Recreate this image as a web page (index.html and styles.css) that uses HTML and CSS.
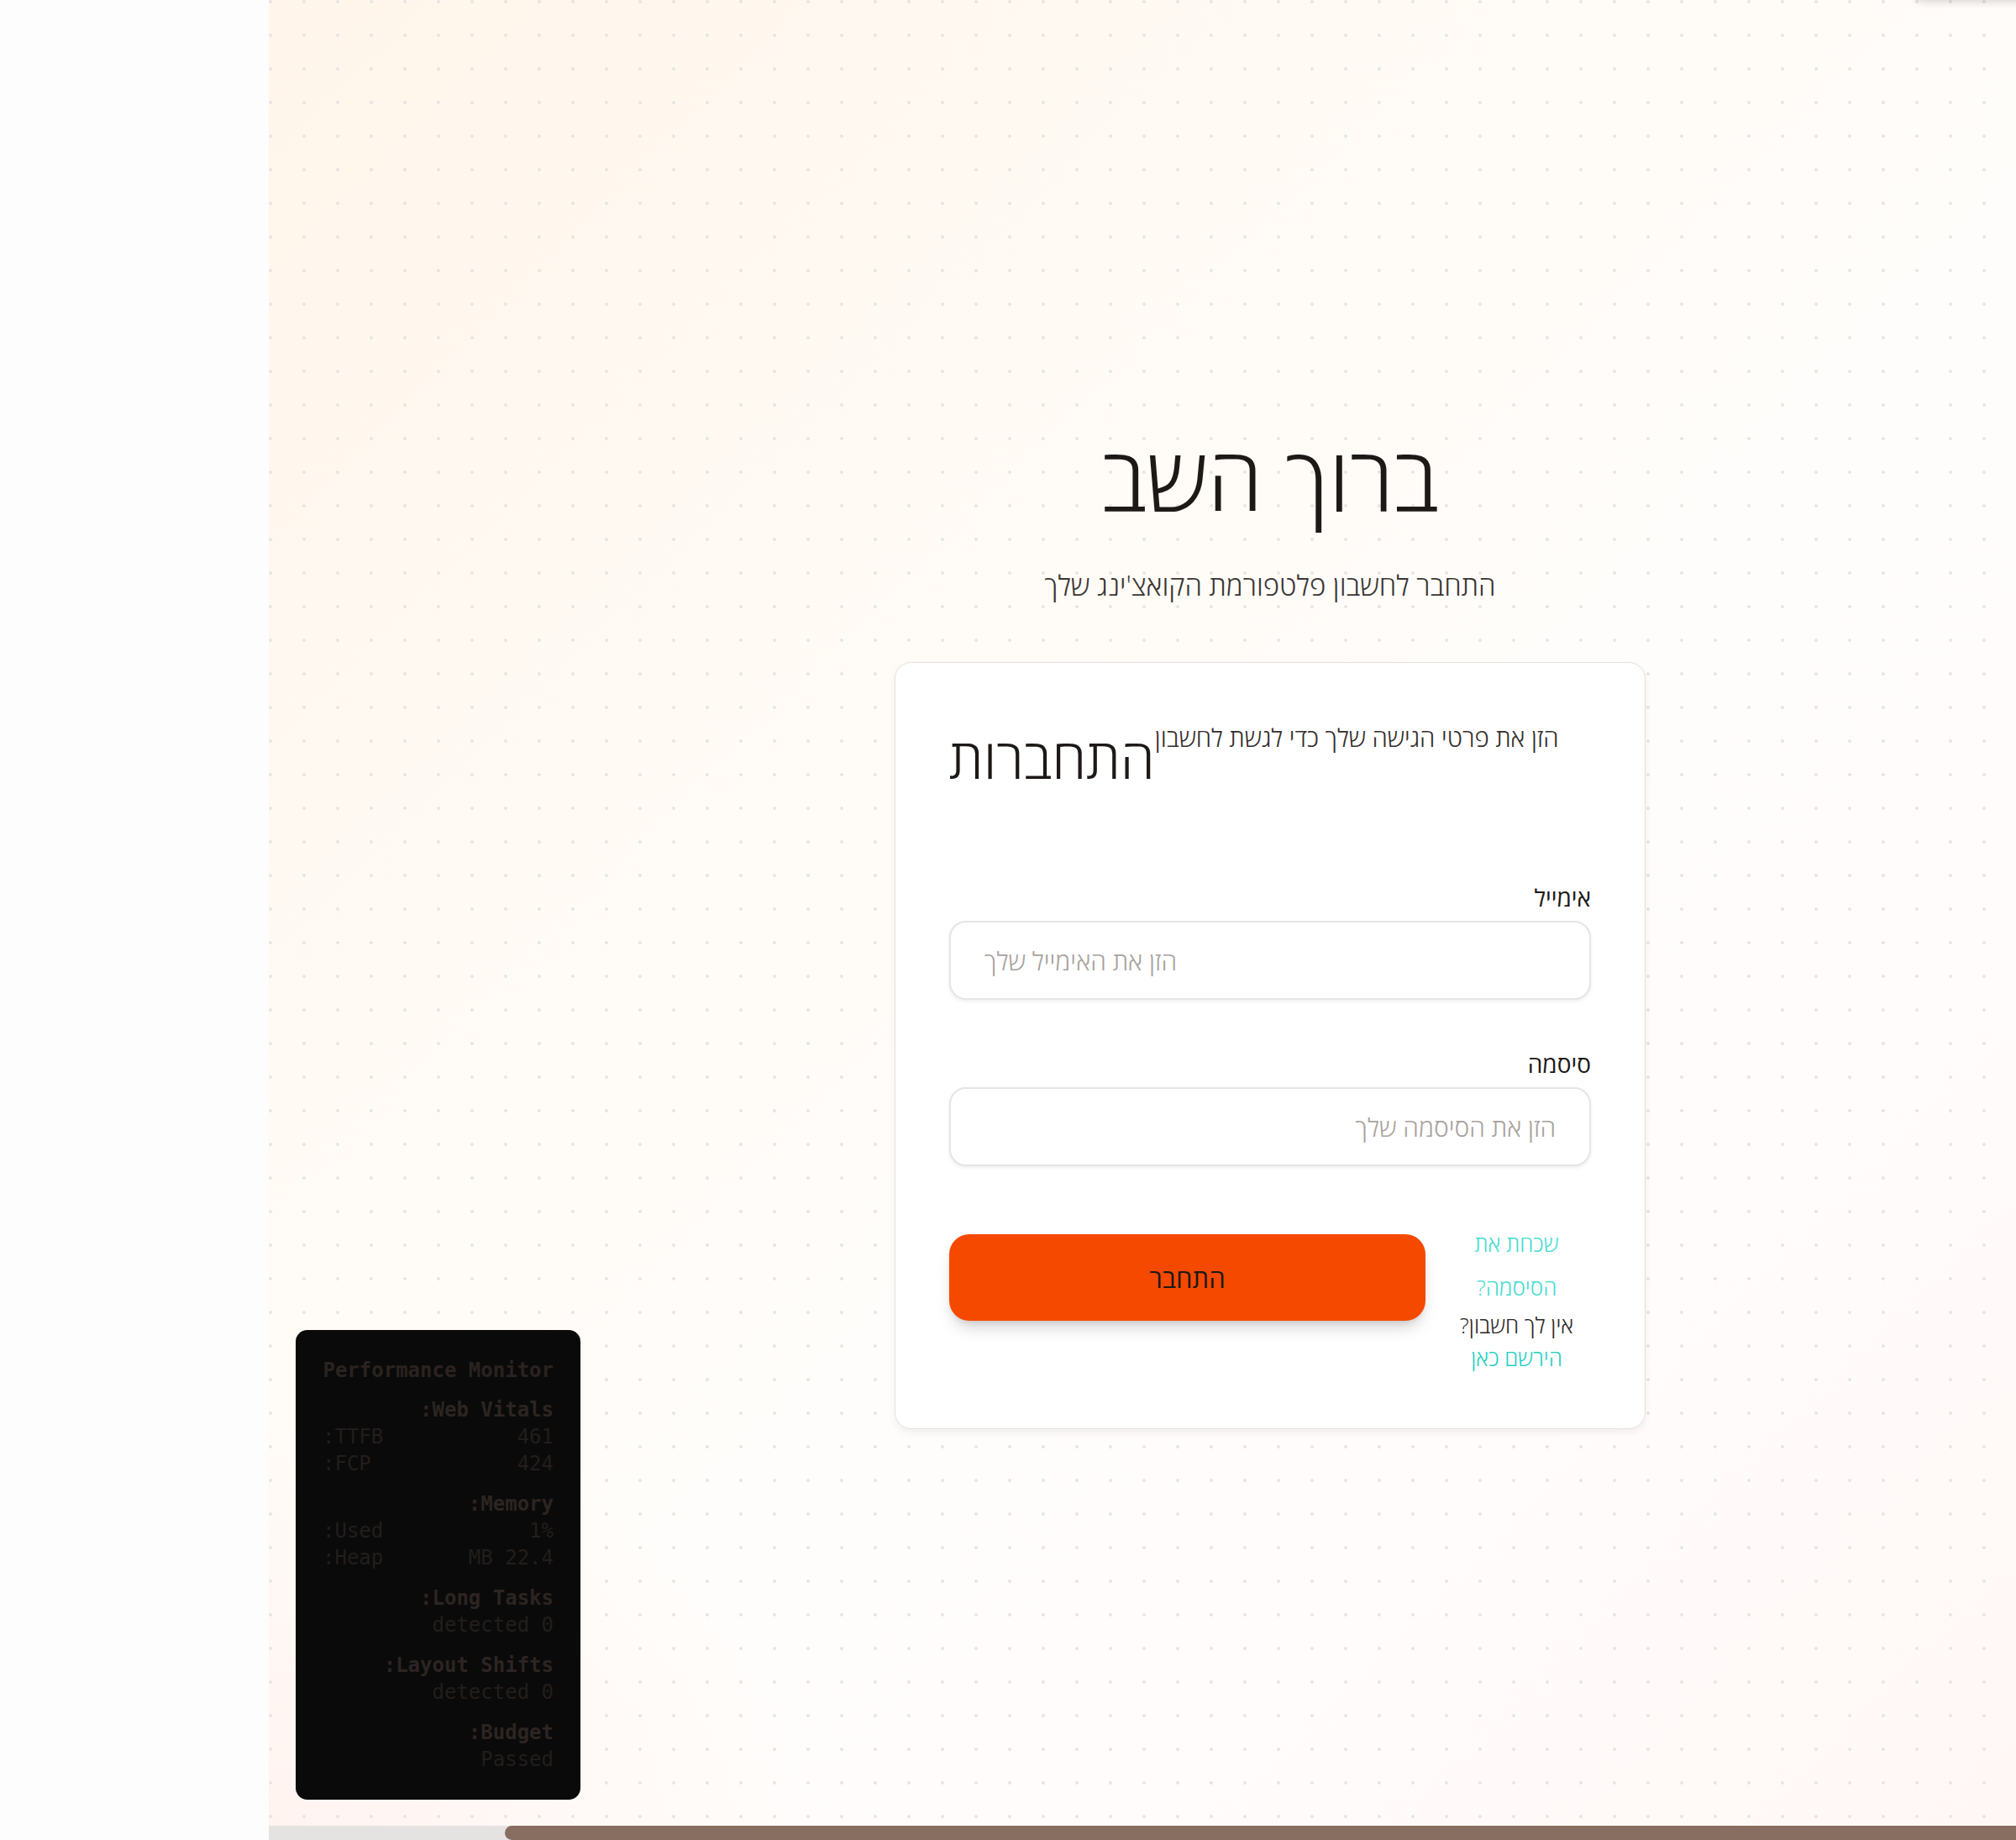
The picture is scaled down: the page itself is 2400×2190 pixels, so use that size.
FILE: index.html
```html
<!DOCTYPE html>
<html lang="he" dir="rtl">
<head>
<meta charset="utf-8">
<title>התחברות</title>
<link rel="stylesheet" href="styles.css">
</head>
<body>
<div class="app">
  <div class="side-strip"></div>
  <div class="main">
    <div class="viewport">
      <div class="top-shadow"></div>
      <div class="page">
        <h1 class="hero-title">ברוך השב</h1>
        <p class="hero-sub">התחבר לחשבון פלטפורמת הקואצ'ינג שלך</p>
        <div class="card">
          <div class="card-header">
            <h2 class="card-title">התחברות</h2>
            <p class="card-desc">הזן את פרטי הגישה שלך כדי לגשת לחשבון</p>
          </div>
          <form class="card-form">
            <div class="field">
              <label class="field-label" for="email">אימייל</label>
              <input class="field-input" id="email" type="email" dir="ltr" placeholder="הזן את האימייל שלך">
            </div>
            <div class="field">
              <label class="field-label" for="password">סיסמה</label>
              <input class="field-input" id="password" type="password" placeholder="הזן את הסיסמה שלך">
            </div>
            <div class="actions">
              <div class="links">
                <a class="link-forgot" href="#">שכחת את הסיסמה?</a>
                <p class="signup">אין לך חשבון? <a class="link-signup" href="#">הירשם כאן</a></p>
              </div>
              <button class="submit" type="button">התחבר</button>
            </div>
          </form>
        </div>
      </div>
      <div class="perf">
        <div class="perf-title">Performance Monitor</div>
        <div class="perf-section">
          <div class="perf-head">Web Vitals:</div>
          <div class="perf-row"><span>TTFB:</span><span>461</span></div>
          <div class="perf-row"><span>FCP:</span><span>424</span></div>
        </div>
        <div class="perf-section">
          <div class="perf-head">Memory:</div>
          <div class="perf-row"><span>Used:</span><span>1%</span></div>
          <div class="perf-row"><span>Heap:</span><span>22.4 MB</span></div>
        </div>
        <div class="perf-section">
          <div class="perf-head">Long Tasks:</div>
          <div class="perf-val">0 detected</div>
        </div>
        <div class="perf-section">
          <div class="perf-head">Layout Shifts:</div>
          <div class="perf-val">0 detected</div>
        </div>
        <div class="perf-section last">
          <div class="perf-head">Budget:</div>
          <div class="perf-val">Passed</div>
        </div>
      </div>
    </div>
    <div class="hscroll"><div class="hscroll-thumb"></div></div>
  </div>
</div>
</body>
</html>
```

FILE: styles.css
```css
* { box-sizing: border-box; }
html, body { margin: 0; padding: 0; }
body {
  width: 2400px;
  height: 2190px;
  overflow: hidden;
  font-family: "Open Sans", "Noto Sans", "DejaVu Sans", sans-serif;
  color: #1c1917;
  background: #fdfdfd;
}
.app {
  direction: ltr;
  display: flex;
  height: 2190px;
}
.side-strip {
  width: 320px;
  flex: none;
  background: #fdfdfd;
}
.main {
  flex: 1;
  display: flex;
  flex-direction: column;
  direction: rtl;
  min-width: 0;
}
.viewport {
  position: relative;
  flex: 1;
  overflow: hidden;
  background-color: #fffaf6;
  background-image:
    radial-gradient(circle, #e9e5e1 1.6px, transparent 2.2px),
    radial-gradient(ellipse 900px 700px at 0% 100%, rgba(255, 236, 232, 0.55), transparent 70%),
    linear-gradient(135deg, #fff5ea 0%, #fffaf4 30%, #fffdfb 55%, #fffcfb 75%, #fff7f6 100%);
  background-size: 40px 40px, 100% 100%, 100% 100%;
  background-position: -18px -18px, 0 0, 0 0;
}
.top-shadow {
  position: absolute;
  top: -40px;
  left: 1958px;
  width: 140px;
  height: 40px;
  background: #fff;
  border-radius: 0 0 12px 12px;
  box-shadow: 0 3px 10px rgba(0, 0, 0, 0.14);
}
.page {
  display: flex;
  flex-direction: column;
  align-items: center;
  padding: 504px 0 0 304px;
}
.hero-title {
  margin: 0;
  font-size: 106px;
  line-height: 128px;
  font-weight: 300;
  color: #1c1917;
}
.hero-sub {
  margin: 41px 0 0;
  font-size: 33px;
  line-height: 48px;
  font-weight: 300;
  color: #3a3532;
}
.card {
  margin-top: 67px;
  width: 894px;
  background: #fff;
  border: 1px solid #e4e1de;
  border-radius: 20px;
  padding: 64px;
  box-shadow: 0 4px 10px rgba(0, 0, 0, 0.06);
}
.card-header {
  display: flex;
  flex-direction: row-reverse;
  justify-content: flex-start;
  align-items: flex-start;
  margin-bottom: 99px;
}
.card-title {
  margin: 0;
  font-size: 66px;
  line-height: 96px;
  font-weight: 300;
  color: #1c1917;
  white-space: nowrap;
}
.card-desc {
  margin: 0;
  font-size: 29.5px;
  line-height: 50px;
  font-weight: 300;
  color: #322d2a;
  white-space: nowrap;
}
.card-form {
  display: flex;
  flex-direction: column;
  gap: 56px;
}
.field {
  display: flex;
  flex-direction: column;
}
.field-label {
  font-size: 28px;
  line-height: 40px;
  font-weight: 400;
  color: #1c1917;
  margin-bottom: 8px;
}
.field-input {
  height: 94px;
  width: 100%;
  border: 2px solid #e5e5e5;
  border-radius: 20px;
  background: #fff;
  padding: 0 40px;
  font-family: inherit;
  font-size: 30px;
  font-weight: 300;
  color: #1c1917;
  box-shadow: 0 2px 4px rgba(0, 0, 0, 0.07);
  outline: none;
}
.field-input::placeholder {
  color: #a8a29e;
  opacity: 1;
}
.actions {
  display: flex;
  align-items: flex-start;
  gap: 20px;
  margin-top: 10px;
}
.links {
  width: 177px;
  flex: none;
  text-align: center;
  font-size: 26px;
  font-weight: 300;
}
.link-forgot {
  display: block;
  line-height: 52px;
  color: #45dccf;
  text-decoration: none;
}
.signup {
  margin: 0;
  line-height: 39px;
  color: #2b2725;
}
.link-signup {
  display: block;
  color: #1fcfc2;
  text-decoration: none;
}
.submit {
  flex: 1;
  margin-top: 15px;
  height: 103px;
  border: none;
  border-radius: 24px;
  background: #f54900;
  color: #1c1917;
  font-family: inherit;
  font-size: 31px;
  font-weight: 400;
  box-shadow: 0 12px 20px -6px rgba(0, 0, 0, 0.2), 0 4px 8px -4px rgba(0, 0, 0, 0.12);
}
.perf {
  position: absolute;
  left: 32px;
  bottom: 31px;
  width: 339px;
  padding: 32px;
  background: #0a0a0a;
  border-radius: 14px;
  font-family: "DejaVu Sans Mono", "Liberation Mono", monospace;
  font-size: 24px;
  line-height: 32px;
  color: #221e1c;
}
.perf-title {
  font-weight: 700;
  color: #2a2320;
  margin-bottom: 15px;
}
.perf-section { margin-bottom: 16px; }
.perf-section.last { margin-bottom: 0; }
.perf-head {
  font-weight: 700;
  color: #2c2522;
}
.perf-row {
  display: flex;
  flex-direction: row-reverse;
  justify-content: space-between;
}
.perf-val { color: #221e1c; }
.hscroll {
  height: 17px;
  flex: none;
  background: #e5e3e1;
  position: relative;
}
.hscroll-thumb {
  position: absolute;
  top: 0;
  bottom: 0;
  right: 0;
  left: 281px;
  background: #886e60;
  border-radius: 9px 0 0 9px;
}
```
